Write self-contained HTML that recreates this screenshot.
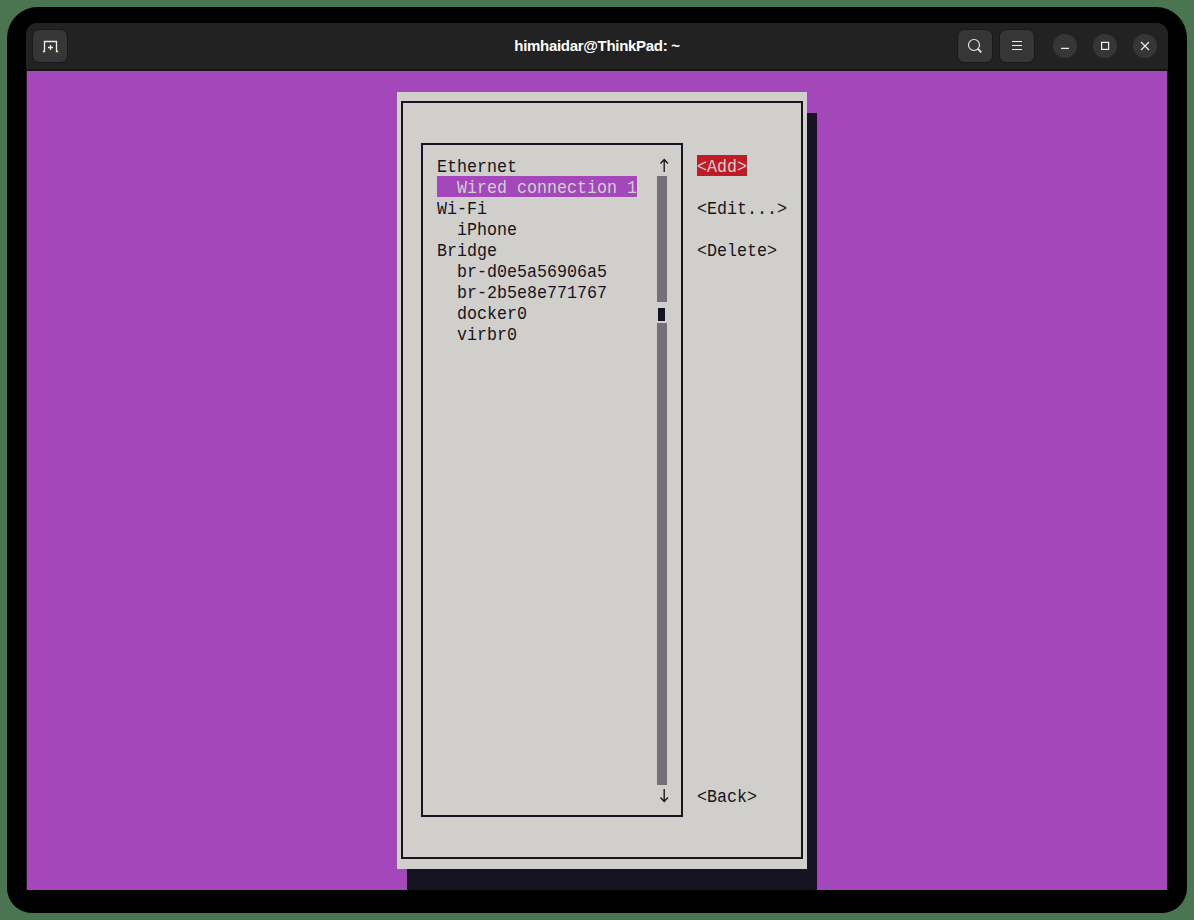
<!DOCTYPE html>
<html><head><meta charset="utf-8">
<style>
*{margin:0;padding:0;box-sizing:border-box}
html,body{width:1194px;height:920px;overflow:hidden;background:#4b7551}
.a{position:absolute}
#frame{left:7px;top:7px;width:1180px;height:906px;background:#000;border-radius:31px 31px 25px 25px}
#win{left:26px;top:23px;width:1142px;height:867px;background:#222222;border-radius:11px 11px 0 0;overflow:hidden}
#hdrline{left:26px;top:69px;width:1142px;height:2px;background:#141416}
#term{left:27px;top:71px;width:1140px;height:819px;background:#A347BA}
.btn{background:#363636;border-radius:6px;box-shadow:0 0 0 1px rgba(20,17,30,0.55)}
.circ{background:#363636;border-radius:50%;width:24px;height:24px}
#title{left:0;top:37px;width:1194px;text-align:center;font:bold 15px/18px "Liberation Sans",sans-serif;letter-spacing:-0.3px;color:#ffffff}
.t{position:absolute;height:21px;line-height:21px;padding-top:2px;font-family:"Liberation Mono",monospace;font-size:18px;transform:scaleX(0.925926);transform-origin:0 0;white-space:pre;color:#171421}
.t span{display:inline-block}
svg{position:absolute;left:0;top:0}
</style></head><body>
<div class="a" id="frame"></div>
<div class="a" id="win"></div>
<div class="a" id="hdrline"></div>
<div class="a" id="term"></div>
<!-- header buttons -->
<div class="a btn" style="left:33px;top:30px;width:34px;height:32px"></div>
<div class="a btn" style="left:958px;top:30px;width:34px;height:32px"></div>
<div class="a btn" style="left:1000px;top:30px;width:34px;height:32px"></div>
<div class="a circ" style="left:1053px;top:34px"></div>
<div class="a circ" style="left:1093px;top:34px"></div>
<div class="a circ" style="left:1133px;top:34px"></div>
<div class="a" id="title">himhaidar@ThinkPad: ~</div>
<svg width="1194" height="920" viewBox="0 0 1194 920" fill="none" stroke="#eeeee6" stroke-width="1.3">
  <path d="M42.8 51.5H44.5V41.5H56.5V51.5H58.2"/>
  <path d="M48 47.5H53M50.5 45V50"/>
  <circle cx="974" cy="45" r="5.5" stroke-width="1.1"/>
  <path d="M977.9 48.9L981.3 52.3" stroke-width="1.7"/>
  <path d="M1012 41.5H1022M1012 45.5H1022M1012 49.5H1022" stroke-width="1.2"/>
  <path d="M1061 48.4H1069"/>
  <rect x="1101.6" y="42.4" width="7" height="7" stroke-width="1.2"/>
  <path d="M1141 42L1149 50M1149 42L1141 50" stroke-width="1.2"/>
</svg>
<svg width="1194" height="920" viewBox="0 0 1194 920" fill="none" stroke="#171421" stroke-width="1.35" style="z-index:5">
  <path d="M664.2 159.5V172M660.5 163.5L664.2 159.6L667.9 163.5"/>
  <path d="M664.2 789V801.5M660.5 797.5L664.2 801.4L667.9 797.5"/>
</svg>
<!-- dialog -->
<div class="a" style="left:407px;top:113px;width:410px;height:777px;background:#171421"></div>
<div class="a" style="left:397px;top:92px;width:410px;height:777px;background:#D0CFCC"></div>
<div class="a" style="left:401px;top:101px;width:402px;height:758px;border:2px solid #171421"></div>
<div class="a" style="left:421px;top:143px;width:262px;height:674px;border:2px solid #171421"></div>
<!-- scrollbar -->
<div class="a" style="left:657px;top:176px;width:10px;height:126px;background:#737176"></div>
<div class="a" style="left:657px;top:323px;width:10px;height:462px;background:#737176"></div>
<div class="a" style="left:658px;top:308px;width:7px;height:13px;background:#171421"></div>
<!-- selection bar -->
<div class="a" style="left:437px;top:176px;width:200px;height:21px;background:#A347BA"></div>
<div class="a" style="left:697px;top:155px;width:50px;height:21px;background:#C01C28"></div>
<!-- text -->
<div class="t" style="left:437px;top:155px">Ethernet</div>
<div class="t" style="left:437px;top:176px;color:#D0CFCC">  Wired connection 1</div>
<div class="t" style="left:437px;top:197px">Wi-Fi</div>
<div class="t" style="left:437px;top:218px">  iPhone</div>
<div class="t" style="left:437px;top:239px">Bridge</div>
<div class="t" style="left:437px;top:260px">  br-d0e5a56906a5</div>
<div class="t" style="left:437px;top:281px">  br-2b5e8e771767</div>
<div class="t" style="left:437px;top:302px">  docker0</div>
<div class="t" style="left:437px;top:323px">  virbr0</div>
<div class="t" style="left:697px;top:155px;color:#D0CFCC">&lt;Add&gt;</div>
<div class="t" style="left:697px;top:197px">&lt;Edit...&gt;</div>
<div class="t" style="left:697px;top:239px">&lt;Delete&gt;</div>
<div class="t" style="left:697px;top:785px">&lt;Back&gt;</div>
</body></html>
